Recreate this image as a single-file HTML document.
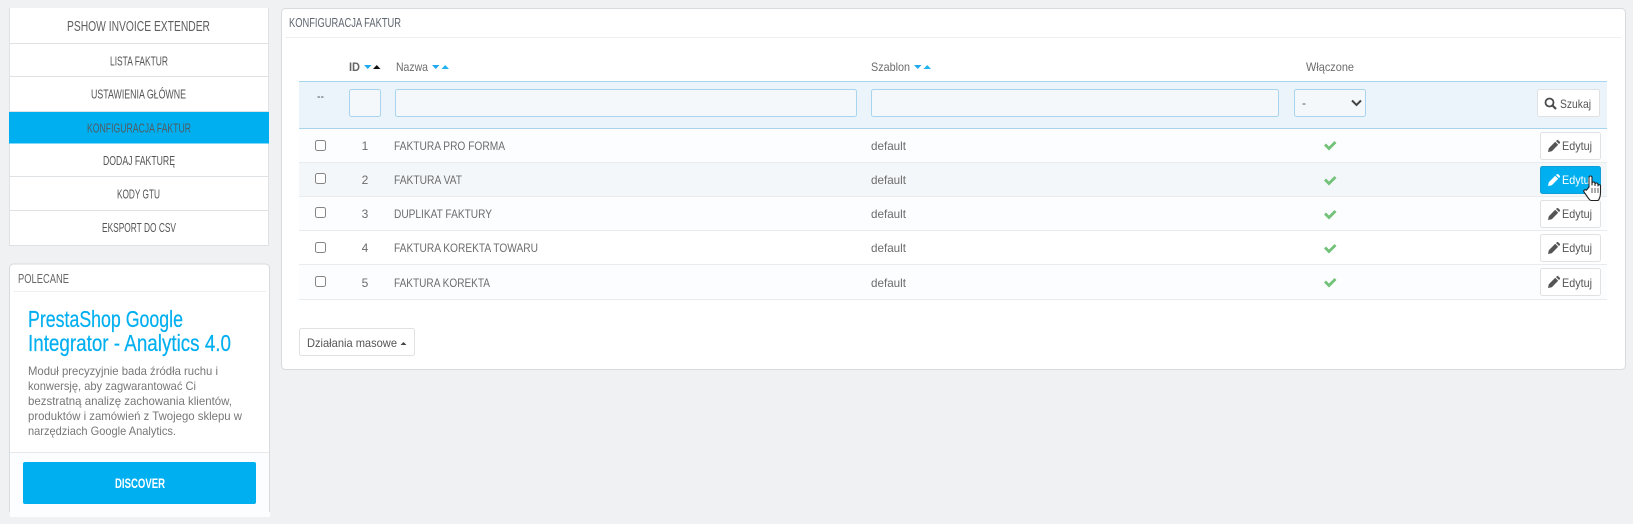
<!DOCTYPE html>
<html lang="pl"><head><meta charset="utf-8"><title>Konfiguracja faktur</title>
<style>
html,body{margin:0;padding:0;background:#eff1f2;width:1633px;height:524px;overflow:hidden}
svg{display:block}
text{font-family:"Liberation Sans",sans-serif;font-size:12px;fill:#666}
.m{font-size:12.5px;fill:#555}
.n{font-size:12px;fill:#6c6c6c}
.b{font-size:12px;fill:#555}
.d{font-size:12px;fill:#777}
.h{font-size:12px;fill:#6c6c6c}
</style></head><body>
<svg width="1633" height="524" viewBox="0 0 1633 524" xmlns="http://www.w3.org/2000/svg">
<defs>
<path id="pen" d="M0 12l.8-3.800 6.400-6.400 3 3-6.400 6.400zM8 1l.8-.8a1 1 0 0 1 1.400 0l1.600 1.600a1 1 0 0 1 0 1.400l-.8.8z"/>
<path id="chk" d="M0 5.500l2-2 3 3 5.500-5.500 2 2-7.500 7.500z"/>
<path id="dn" d="M0 0h7.500l-3.750 4z"/>
<path id="up" d="M0 4h7.500l-3.750-4z"/>
</defs>

<!-- left menu -->
<rect x="9" y="8" width="260" height="238" fill="#dfe2e4"/>
<rect x="10" y="8" width="258" height="35" fill="#fff"/>
<rect x="10" y="44" width="258" height="32" fill="#fff"/>
<rect x="10" y="77" width="258" height="34" fill="#fff"/>
<rect x="9" y="112" width="260" height="31.500" fill="#00aff0"/>
<rect x="10" y="143.500" width="258" height="32.500" fill="#fff"/>
<rect x="10" y="177" width="258" height="33" fill="#fff"/>
<rect x="10" y="211" width="258" height="34" fill="#fff"/>
<text x="67" y="31" textLength="143" lengthAdjust="spacingAndGlyphs" style="font-size:14.500px;fill:#5f5f5f">PSHOW INVOICE EXTENDER</text>
<text class="m" x="110" y="65.500" textLength="58" lengthAdjust="spacingAndGlyphs">LISTA FAKTUR</text>
<text class="m" x="91" y="98.500" textLength="95" lengthAdjust="spacingAndGlyphs">USTAWIENIA GŁÓWNE</text>
<text class="m" x="87" y="132.500" textLength="104" lengthAdjust="spacingAndGlyphs" style="fill:#505c62">KONFIGURACJA FAKTUR</text>
<text class="m" x="103" y="165" textLength="72" lengthAdjust="spacingAndGlyphs">DODAJ FAKTURĘ</text>
<text class="m" x="117" y="198.500" textLength="43" lengthAdjust="spacingAndGlyphs">KODY GTU</text>
<text class="m" x="102" y="232" textLength="74" lengthAdjust="spacingAndGlyphs">EKSPORT DO CSV</text>

<!-- polecane panel -->
<path d="M9.500 512V268a4 4 0 0 1 4-4h252a4 4 0 0 1 4 4v244" fill="#fff" stroke="#d8dbdd"/>
<rect x="10" y="452" width="259" height="60" fill="#fcfdfe"/>
<rect x="10" y="512" width="260" height="5" fill="#fcfdfe"/>
<rect x="13" y="291" width="253" height="1" fill="#eeeff0"/>
<rect x="10" y="452" width="259" height="1" fill="#e6e8ea"/>
<text x="18" y="283" textLength="51" lengthAdjust="spacingAndGlyphs" style="font-size:13px;fill:#666">POLECANE</text>
<text x="28" y="327" textLength="155" lengthAdjust="spacingAndGlyphs" style="font-size:23px;fill:#00aff0;stroke:#00aff0;stroke-width:.2px">PrestaShop Google</text>
<text x="28" y="351" textLength="203" lengthAdjust="spacingAndGlyphs" style="font-size:23px;fill:#00aff0;stroke:#00aff0;stroke-width:.2px">Integrator - Analytics 4.0</text>
<text class="d" x="28" y="375" textLength="190" lengthAdjust="spacingAndGlyphs">Moduł precyzyjnie bada źródła ruchu i</text>
<text class="d" x="28" y="390" textLength="168" lengthAdjust="spacingAndGlyphs">konwersję, aby zagwarantować Ci</text>
<text class="d" x="28" y="405" textLength="204" lengthAdjust="spacingAndGlyphs">bezstratną analizę zachowania klientów,</text>
<text class="d" x="28" y="420" textLength="214" lengthAdjust="spacingAndGlyphs">produktów i zamówień z Twojego sklepu w</text>
<text class="d" x="28" y="435" textLength="148" lengthAdjust="spacingAndGlyphs">narzędziach Google Analytics.</text>
<rect x="23" y="462" width="233" height="42" rx="2" fill="#00aff0"/>
<text x="115" y="488" textLength="50" lengthAdjust="spacingAndGlyphs" style="font-size:14px;font-weight:700;fill:#fff">DISCOVER</text>

<!-- main panel -->
<rect x="281.500" y="8.500" width="1344" height="361" rx="4" fill="#fff" stroke="#d8dbdd"/>
<rect x="285" y="37" width="1336" height="1" fill="#eeeff0"/>
<text x="289" y="27" textLength="112" lengthAdjust="spacingAndGlyphs" style="font-size:13px;fill:#5f6670">KONFIGURACJA FAKTUR</text>

<!-- headers -->
<text x="349" y="71" textLength="11" lengthAdjust="spacingAndGlyphs" style="font-weight:700;fill:#666">ID</text>
<use href="#dn" x="364" y="65" fill="#1fa9ee"/><use href="#up" x="373" y="65" fill="#111"/>
<text class="h" x="396" y="71" textLength="32" lengthAdjust="spacingAndGlyphs">Nazwa</text>
<use href="#dn" x="432" y="65" fill="#1fa9ee"/><use href="#up" x="441.500" y="65" fill="#1fb4f0"/>
<text class="h" x="871" y="71" textLength="39" lengthAdjust="spacingAndGlyphs">Szablon</text>
<use href="#dn" x="914" y="65" fill="#1fa9ee"/><use href="#up" x="923.500" y="65" fill="#1fb4f0"/>
<text class="h" x="1306" y="71" textLength="48" lengthAdjust="spacingAndGlyphs">Włączone</text>

<!-- filter -->
<rect x="299" y="81" width="1308" height="48" fill="#ebf4fb"/>
<rect x="299" y="81" width="1308" height="1" fill="#a8d4ee"/>
<rect x="299" y="128" width="1308" height="1" fill="#a8d4ee"/>
<text x="317" y="100" textLength="7" lengthAdjust="spacingAndGlyphs" style="fill:#555">--</text>
<rect x="349.500" y="89.500" width="31" height="27" rx="2" fill="#f4f8fa" stroke="#a8d4ee"/>
<rect x="395.500" y="89.500" width="461" height="27" rx="2" fill="#f4f8fa" stroke="#a8d4ee"/>
<rect x="871.500" y="89.500" width="407" height="27" rx="2" fill="#f4f8fa" stroke="#a8d4ee"/>
<rect x="1294.500" y="89.500" width="71" height="27" rx="2" fill="#f4f8fa" stroke="#a8d4ee"/>
<text x="1302" y="107" style="fill:#555">-</text>
<path d="M1352 100.500l4.500 4.500 4.500-4.500" fill="none" stroke="#444" stroke-width="2"/>
<rect x="1537.500" y="89.500" width="62" height="27" rx="2" fill="#fff" stroke="#dfe1e3"/>
<circle cx="1549.500" cy="102.500" r="4" fill="none" stroke="#4a4a4a" stroke-width="1.800"/>
<path d="M1552.500 105.500l3.500 3.500" stroke="#4a4a4a" stroke-width="2.200"/>
<text class="b" x="1560" y="108" textLength="31" lengthAdjust="spacingAndGlyphs">Szukaj</text>

<!-- rows -->
<rect x="299" y="129" width="1308" height="33" fill="#fcfdfe"/>
<rect x="299" y="162" width="1308" height="34" fill="#f4f7fa"/>
<rect x="299" y="196" width="1308" height="34" fill="#fcfdfe"/>
<rect x="299" y="230" width="1308" height="34" fill="#fff"/>
<rect x="299" y="264" width="1308" height="35" fill="#fcfdfe"/>
<g fill="#e9ebed">
<rect x="299" y="162" width="1308" height="1"/><rect x="299" y="196" width="1308" height="1"/>
<rect x="299" y="230" width="1308" height="1"/><rect x="299" y="264" width="1308" height="1"/>
<rect x="299" y="299" width="1308" height="1"/>
</g>
<g fill="#fff" stroke="#858585">
<rect x="315.500" y="140.500" width="10" height="10" rx="2"/>
<rect x="315.500" y="173.500" width="10" height="10" rx="2"/>
<rect x="315.500" y="207.500" width="10" height="10" rx="2"/>
<rect x="315.500" y="242.500" width="10" height="10" rx="2"/>
<rect x="315.500" y="276.500" width="10" height="10" rx="2"/>
</g>
<g text-anchor="middle">
<text class="n" x="365" y="150">1</text><text class="n" x="365" y="184">2</text><text class="n" x="365" y="218">3</text><text class="n" x="365" y="252">4</text><text class="n" x="365" y="287">5</text>
</g>
<text class="n" x="394" y="150" textLength="111" lengthAdjust="spacingAndGlyphs">FAKTURA PRO FORMA</text>
<text class="n" x="394" y="184" textLength="68" lengthAdjust="spacingAndGlyphs">FAKTURA VAT</text>
<text class="n" x="394" y="218" textLength="98" lengthAdjust="spacingAndGlyphs">DUPLIKAT FAKTURY</text>
<text class="n" x="394" y="252" textLength="144" lengthAdjust="spacingAndGlyphs">FAKTURA KOREKTA TOWARU</text>
<text class="n" x="394" y="287" textLength="96" lengthAdjust="spacingAndGlyphs">FAKTURA KOREKTA</text>
<text class="n" x="871" y="150" textLength="35" lengthAdjust="spacingAndGlyphs">default</text>
<text class="n" x="871" y="184" textLength="35" lengthAdjust="spacingAndGlyphs">default</text>
<text class="n" x="871" y="218" textLength="35" lengthAdjust="spacingAndGlyphs">default</text>
<text class="n" x="871" y="252" textLength="35" lengthAdjust="spacingAndGlyphs">default</text>
<text class="n" x="871" y="287" textLength="35" lengthAdjust="spacingAndGlyphs">default</text>
<g fill="#72c279">
<use href="#chk" x="1324" y="140"/><use href="#chk" x="1324" y="175"/><use href="#chk" x="1324" y="209"/><use href="#chk" x="1324" y="243"/><use href="#chk" x="1324" y="277"/>
</g>

<!-- edit buttons -->
<rect x="1540.500" y="132.500" width="60" height="27" rx="2" fill="#fff" stroke="#dfe1e3"/>
<use href="#pen" x="1548" y="140" fill="#555"/>
<text class="b" x="1562" y="150" textLength="30" lengthAdjust="spacingAndGlyphs">Edytuj</text>
<rect x="1540.500" y="166.500" width="60" height="27" rx="2" fill="#00aff0" stroke="#0e9fd8"/>
<use href="#pen" x="1548" y="174" fill="#fff"/>
<text x="1562" y="184" textLength="30" lengthAdjust="spacingAndGlyphs" style="fill:#fff">Edytuj</text>
<rect x="1540.500" y="200.500" width="60" height="27" rx="2" fill="#fff" stroke="#dfe1e3"/>
<use href="#pen" x="1548" y="208" fill="#555"/>
<text class="b" x="1562" y="218" textLength="30" lengthAdjust="spacingAndGlyphs">Edytuj</text>
<rect x="1540.500" y="234.500" width="60" height="27" rx="2" fill="#fff" stroke="#dfe1e3"/>
<use href="#pen" x="1548" y="242" fill="#555"/>
<text class="b" x="1562" y="252" textLength="30" lengthAdjust="spacingAndGlyphs">Edytuj</text>
<rect x="1540.500" y="268.500" width="60" height="27" rx="2" fill="#fff" stroke="#dfe1e3"/>
<use href="#pen" x="1548" y="276" fill="#555"/>
<text class="b" x="1562" y="287" textLength="30" lengthAdjust="spacingAndGlyphs">Edytuj</text>

<!-- hand cursor -->
<path d="M1589 187v-9.500a1.500 1.500 0 0 1 3 0v7.500-1.500a1.500 1.500 0 0 1 3 0v2-1a1.500 1.500 0 0 1 3 0v1.500-.5a1.400 1.400 0 0 1 2.500 0v7c0 4-1.500 8-3 8h-6c-2 0-2.500-1.500-4-3.500l-3.500-5c-1-1.800 1.200-3 2.500-1.800z" fill="#fff" stroke="#222" stroke-width="1.100" stroke-linejoin="round"/>
<path d="M1592 188v5M1595 188v5M1598 188v5" stroke="#333" stroke-width=".8"/>

<!-- bulk -->
<rect x="299.500" y="328.500" width="115" height="27" rx="2" fill="#fff" stroke="#dfe1e3"/>
<text class="b" x="307" y="347" textLength="90" lengthAdjust="spacingAndGlyphs">Działania masowe</text>
<path d="M400.500 345h6l-3-3z" fill="#444"/>
</svg>
</body></html>
